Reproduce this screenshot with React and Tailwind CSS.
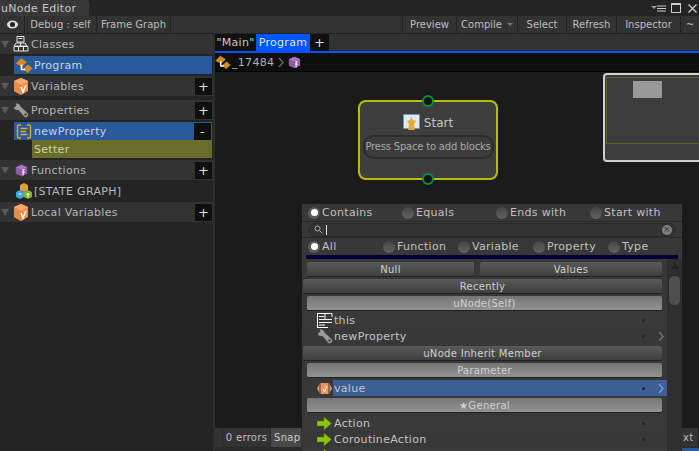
const VarIcon = () => (
  <svg width="16" height="17" viewBox="0 0 16 17" className="shrink-0">
    <polygon points="8,0 15,3 15,13 8,17 1,13 1,3" fill="#ef9150" />
    <polygon points="8,0 15,3 8,7 1,3" fill="#f5a973" />
    <polygon points="1,3 8,7 8,17 1,13" fill="#e88a48" />
    <path d="M8 9l2 5 3-7" stroke="#fff" strokeWidth="1.5" fill="none" />
  </svg>
);
const FnIcon = () => (
  <svg width="13" height="13" viewBox="0 0 16 16" className="shrink-0">
    <polygon points="8,1 15,4 15,12 8,15 1,12 1,4" fill="#8f5aa8" />
    <polygon points="8,1 15,4 8,7 1,4" fill="#a875bf" />
    <path d="M12 7h-2v7M9 10h3" stroke="#fff" strokeWidth="1.3" fill="none" />
  </svg>
);
const ClassIcon = ({ size = 18 }) => (
  <svg width={size} height={size} viewBox="0 0 18 17" className="shrink-0">
    <polygon points="0.500,7 6,1.500 12,5.500 7,10.500" fill="#cf8a2c" stroke="#8a5a1a" strokeWidth=".5" />
    <polygon points="8,12.500 13,8 17.500,12 12.500,16.500" fill="#cf8a2c" stroke="#8a5a1a" strokeWidth=".5" />
    <path d="M6.500 8V13H10" stroke="#fff" strokeWidth="1.600" fill="none" />
  </svg>
);
const BoxesIcon = () => (
  <svg width="16" height="17" viewBox="0 0 16 17" className="shrink-0">
    <polygon points="8,0 12,2 12,7 8,9 4,7 4,2" fill="#e99b3b" />
    <polygon points="4,7 8,9 8,14 4,16 0,14 0,9" fill="#3fa5e0" />
    <polygon points="12,7 16,9 16,14 12,16 8,14 8,9" fill="#7fb52f" />
    <path d="M2.500 11h3M10.500 11h3M12 11v3.500" stroke="#fff" fill="none" />
  </svg>
);
const Wrench = ({ c = "#9a9a9a" }) => (
  <svg width="16" height="15" viewBox="0 0 16 15" className="shrink-0">
    <path d="M1 4.500 3.500 2.500 2.500 .5C5 0 7 1 7.500 3.500L15 10.500C16 12.500 14 15 11.500 14L5.500 7C3 7.500 1 6.500 1 4.500Z" fill={c} />
    <circle cx="12.500" cy="11.500" r="1.200" fill="#444" />
  </svg>
);
const PropIcon = () => (
  <svg width="16" height="15" viewBox="0 0 16 15" className="shrink-0">
    <path d="M5 1H3Q1.500 1 1.500 3V12Q1.500 14 3 14H5M11 1H13Q14.500 1 14.500 3V12Q14.500 14 13 14H11" stroke="#e8a52c" strokeWidth="1.4" fill="none" />
    <path d="M4.500 4.500H11.500M4.500 7.500H10M4.500 10.500H11.500" stroke="#e8a52c" strokeWidth="1.4" />
  </svg>
);
const ThisIcon = () => (
  <svg width="16" height="15" viewBox="0 0 16 15" className="shrink-0">
    <path d="M0 .5H15M.5 0V15M0 14.500H11M7 3.500H2M2 6.500H15M2 9.500H15M2 12H8M8 1V6M15 .5V4" stroke="#fff" fill="none" />
  </svg>
);
const Arrow = () => (
  <svg width="15" height="13" viewBox="0 0 15 13" className="shrink-0">
    <path d="M0 4H7V0L14.500 6.500L7 13V9H0Z" fill="#8cc414" stroke="#4d7a05" strokeWidth=".6" />
  </svg>
);
const Chevron = ({ c = "#707070" }) => (
  <svg width="6" height="11" viewBox="0 0 6 11"><path d="M1 1 5 5.500 1 10" stroke={c} strokeWidth="1.400" fill="none" /></svg>
);
const Tri = () => <span className="w-0 h-0 border-x-[4px] border-x-transparent border-t-[7px] border-t-[#5a5a5a] ml-[1px] mr-[3px] shrink-0" />;
const Plus = ({ minus }) => (
  <span className="w-[17px] h-[17px] bg-[#0f0f0f] text-[#ddd] flex items-center justify-center text-[13px] shrink-0 ml-auto">{minus ? "-" : "+"}</span>
);
const Header = ({ icon, label, plus }) => (
  <div className="h-[20px] bg-[#333333] flex items-center pr-[1px] shrink-0">
    <Tri />
    <span className="w-[18px] flex justify-center mr-[1px] shrink-0">{icon}</span>
    <span className="text-[#b4b4b4]">{label}</span>
    {plus && <Plus />}
  </div>
);
const Tool = ({ children, w }) => (
  <div className={`flex items-center justify-center border-r border-[#222] h-full ${w}`}>{children}</div>
);
const Radio = ({ on, label, w }) => (
  <div className={`flex items-center ${w}`}>
    <span className={`w-[12px] h-[12px] rounded-full mr-[2px] shrink-0 flex items-center justify-center ${on ? "bg-[#5a5a5a]" : "bg-gradient-to-b from-[#444] to-[#626262]"}`}>
      {on && <span className="w-[7px] h-[7px] rounded-full bg-white" />}
    </span>
    <span className="text-[#c0c0c0]">{label}</span>
  </div>
);
const GBtn = ({ children, light, cls = "" }) => (
  <div className={`h-[15px] pt-[1px] rounded-[2px] shrink-0 flex items-center justify-center text-[10px] text-[#d0d0d0] border-b border-[#222] ${light ? "bg-gradient-to-b from-[#767676] to-[#929292]" : "bg-gradient-to-b from-[#5a5a5a] to-[#3f3f3f]"} ${cls}`}>{children}</div>
);
const Row = ({ icon, label, alt, chev, sel }) => (
  <div className={`h-[16px] shrink-0 flex items-center ${alt ? "bg-[#3a3a3a]" : "bg-[#383838]"}`}>
    <div className="w-[31px] pl-[14px] flex justify-center shrink-0">{icon}</div>
    <div className={`h-full flex-1 flex items-center ${sel ? "bg-[#3c5f96]" : ""}`}>
      <span className="text-[#c4c4c4] pl-[1px]">{label}</span>
      <span className="ml-auto w-[3px] h-[3px] rounded-full bg-[#262626]" />
      <span className="w-[22px] flex justify-end pr-[3px]">{chev && <Chevron c={sel ? "#7d9ccc" : "#707070"} />}</span>
    </div>
  </div>
);

export default function App() {
  return (
    <div className="relative w-[699px] h-[451px] overflow-hidden flex flex-col bg-[#1b1b1b] text-[11px] leading-none tracking-[0.3px]" style={{ fontFamily: '"DejaVu Sans", sans-serif' }}>
      <div className="h-[16px] bg-[#242424] flex items-stretch shrink-0">
        <div className="w-[89px] bg-[#383838] rounded-tr-[3px] flex items-center pl-[1px] text-[#c8c8c8] text-[11px]">uNode Editor</div>
        <div className="ml-auto flex items-center gap-[4px] pr-[2px]">
          <svg width="15" height="7" viewBox="0 0 15 7"><path d="M0 1 3 4 6 1Z" fill="#999" /><path d="M6 1H15M6 3.500H15M6 6H15" stroke="#ccc" /></svg>
          <span className="w-[10px] h-[10px] border border-[#ccc] border-t-[2px] ml-[1px]" />
          <svg width="9" height="9" viewBox="0 0 9 9" className="ml-[3px]"><path d="M.5 .5 8.500 8.500M8.500 .5 .5 8.500" stroke="#ccc" strokeWidth="1.300" /></svg>
        </div>
      </div>
      <div className="h-[18px] bg-[#333333] border-b border-[#222] flex items-center text-[10px] text-[#bdbdbd] tracking-normal shrink-0">
        <Tool w="w-[25px]">
          <svg width="11" height="9" viewBox="0 0 11 9"><ellipse cx="5.500" cy="4.500" rx="5.500" ry="4" fill="#ddd" /><circle cx="5.500" cy="4.500" r="2.500" fill="#222" /></svg>
        </Tool>
        <Tool w="w-[72px]">Debug : self</Tool>
        <Tool w="w-[74px]">Frame Graph</Tool>
        <div className="ml-auto flex h-full items-center border-l border-[#222]">
          <Tool w="w-[54px]">Preview</Tool>
          <Tool w="w-[61px]">Compile <span className="ml-[5px] w-0 h-0 border-x-[3px] border-x-transparent border-t-[3px] border-t-[#777]" /></Tool>
          <Tool w="w-[49px]">Select</Tool>
          <Tool w="w-[50px]">Refresh</Tool>
          <Tool w="w-[64px]">Inspector</Tool>
          <div className="w-[18px] flex justify-center">~</div>
        </div>
      </div>
      <div className="flex-1 flex min-h-0">
        <div className="w-[213px] bg-[#242424] flex flex-col shrink-0">
          <Header icon={<svg width="16" height="17" viewBox="0 0 16 17"><path d="M4 .5H11V6H4ZM5.500 2.500H9.500M7.500 6V10M3 7H12L14 10H1ZM1 10.500H15V15H1ZM5.500 11V15M10.500 11V15" stroke="#e5e5e5" fill="none" /></svg>} label="Classes" />
          <div className="h-[2px]" />
          <div className="h-[18px] ml-[14px] mr-[1px] bg-[#27599b] flex items-center shrink-0">
            <span className="w-[20px] flex justify-center shrink-0"><ClassIcon size={18} /></span>
            <span className="text-[#c8d4e4]">Program</span>
          </div>
          <div className="h-[2px]" />
          <Header icon={<VarIcon />} label="Variables" plus />
          <div className="h-[4px]" />
          <Header icon={<Wrench />} label="Properties" plus />
          <div className="h-[2px]" />
          <div className="h-[18px] ml-[14px] mr-[1px] bg-[#27599b] flex items-center pr-[1px] shrink-0">
            <span className="w-[20px] flex justify-center shrink-0"><PropIcon /></span>
            <span className="text-[#c8d4e4]">newProperty</span>
            <Plus minus />
          </div>
          <div className="h-[18px] ml-[32px] mr-[1px] bg-[#6a6d29] flex items-center pl-[2px] text-[#cfcfb4] shrink-0">Setter</div>
          <div className="h-[2px]" />
          <Header icon={<FnIcon />} label="Functions" plus />
          <div className="h-[22px] ml-[14px] flex items-center shrink-0">
            <span className="w-[20px] flex justify-center shrink-0"><BoxesIcon /></span>
            <span className="text-[#b8b8b8]">[STATE GRAPH]</span>
          </div>
          <Header icon={<VarIcon />} label="Local Variables" plus />
        </div>
        <div className="w-[2px] bg-[#2d2d2d] shrink-0" />
        <div className="flex-1 flex flex-col min-w-0 relative">
          <div className="h-[17px] bg-[#333333] flex items-stretch text-[11px] shrink-0">
            <div className="w-[41px] bg-[#111] text-[#c8c8c8] flex items-center justify-center">"Main"</div>
            <div className="w-[54px] bg-[#0055ff] text-[#dfe9ff] flex items-center justify-center">Program</div>
            <div className="w-[19px] bg-[#111] text-[#ddd] text-[13px] flex items-center justify-center">+</div>
          </div>
          <div className="h-[2px] bg-[#0055ff] shrink-0" />
          <div className="h-[19px] bg-[#0f0f0f] flex items-center border-b border-black text-[#b0b0b0] shrink-0">
            <ClassIcon size={16} />
            <span className="ml-[1px]">_17484</span>
            <span className="mx-[4px]"><Chevron c="#666" /></span>
            <FnIcon />
          </div>
          <div className="flex-1 bg-[#1b1b1b] relative">
            <div className="absolute left-[143px] top-[28px] w-[140px] h-[80px] rounded-[8px] border-2 border-[#bdbd00] bg-[#3e3e3e] flex flex-col items-center">
              <span className="absolute left-[62px] -top-[7px] w-[12px] h-[12px] rounded-full border-2 border-[#0a8f3c] bg-[#151515]" />
              <span className="absolute left-[62px] -bottom-[7px] w-[12px] h-[12px] rounded-full border-2 border-[#0a8f3c] bg-[#151515]" />
              <div className="h-[33px] pt-[8px] flex items-center justify-center text-[12px] text-[#c4c4c4] tracking-normal shrink-0">
                <svg width="17" height="18" viewBox="0 0 17 18" className="mr-[4px]">
                  <rect x=".5" y=".5" width="16" height="14" fill="#dfe9ef" stroke="#4d9ad0" strokeDasharray="2 2" />
                  <path d="M8.500 3 10 6 13 7 11 10 12 16H5L6 10 4 7 7 6Z" fill="#e3a73c" />
                </svg>
                Start
              </div>
              <div className="w-[131px] h-[24px] rounded-[10px] border-2 border-[#2c2c2c] bg-[#3c3c3c] flex items-center justify-center text-[10px] text-[#a8a8a8] tracking-[-0.2px] whitespace-nowrap shrink-0">Press Space to add blocks</div>
            </div>
            <div className="absolute left-[388px] top-[1px] w-[110px] h-[89px] rounded-[4px] border-2 border-[#cfcfcf] bg-[#3c3c3c] pt-[2px] pl-[1px]">
              <div className="h-[67px] border border-[#5f5f22] pl-[26px] pt-[3px]">
                <div className="w-[29px] h-[17px] bg-[#999]" />
              </div>
            </div>
          </div>
          <div className="h-[19px] bg-[#333333] flex items-stretch text-[10px] text-[#bdbdbd] shrink-0">
            <div className="ml-[7px] w-[49px] border-x border-[#2a2a2a] flex items-center justify-center">0 errors</div>
            <div className="w-[30px] bg-[#484848] flex items-center pl-[3px] text-[#ccc]">Snap</div>
            <div className="ml-auto w-[17px] flex items-center pl-[1px] border-r border-[#222]">xt</div>
          </div>
          <div className="h-[4px] bg-[#2a2a2a] flex justify-end shrink-0"><div className="w-[17px] bg-[#27599b] mt-[1px]" /></div>
        </div>
      </div>

      <div className="absolute left-[302px] top-[204px] w-[380px] h-[247px] bg-[#2f2f2f] flex flex-col text-[11px] overflow-hidden">
        <div className="h-[18px] bg-[#383838] flex items-center pl-[6px] border-b border-[#2a2a2a] shrink-0">
          <Radio on label="Contains" w="w-[94px]" />
          <Radio label="Equals" w="w-[94px]" />
          <Radio label="Ends with" w="w-[94px]" />
          <Radio label="Start with" w="w-[90px]" />
        </div>
        <div className="h-[16px] bg-[#383838] px-[6px] flex items-center border-b border-[#2a2a2a] shrink-0">
          <div className="flex-1 h-[14px] rounded-full bg-[#333] border border-[#282828] flex items-center pl-[5px] pr-[3px]">
            <svg width="9" height="9" viewBox="0 0 9 9"><circle cx="3.500" cy="3.500" r="2.500" stroke="#aaa" fill="none" /><path d="M5.500 5.500 8.500 8.500" stroke="#aaa" /></svg>
            <span className="ml-[3px] w-[1px] h-[10px] bg-[#ddd]" />
            <span className="ml-auto w-[10px] h-[10px] rounded-full bg-[#808080] text-[#333] text-[9px] flex items-center justify-center">×</span>
          </div>
        </div>
        <div className="h-[17px] bg-[#383838] flex items-center pl-[6px] shrink-0">
          <Radio on label="All" w="w-[75px]" />
          <Radio label="Function" w="w-[75px]" />
          <Radio label="Variable" w="w-[75px]" />
          <Radio label="Property" w="w-[75px]" />
          <Radio label="Type" w="w-[70px]" />
        </div>
        <div className="h-[4px] shrink-0 bg-[#383838] px-[4px]"><div className="h-full bg-[#00003a]" /></div>
        <div className="flex flex-1 min-h-0">
          <div className="w-[365px] bg-[#383838] flex flex-col pt-[3px] shrink-0">
            <div className="flex gap-[6px] pl-[5px] pr-[5px] mb-[2px] shrink-0">
              <GBtn cls="w-[167px]">Null</GBtn>
              <GBtn cls="flex-1">Values</GBtn>
            </div>
            <div className="pl-[1px] pr-[5px] mb-[2px] shrink-0"><GBtn>Recently</GBtn></div>
            <div className="pl-[5px] pr-[5px] mb-[1px] shrink-0"><GBtn light>uNode(Self)</GBtn></div>
            <Row icon={<ThisIcon />} label="this" alt />
            <Row icon={<Wrench />} label="newProperty" chev />
            <div className="pl-[1px] pr-[5px] my-[2px] shrink-0"><GBtn>uNode Inherit Member</GBtn></div>
            <div className="pl-[5px] pr-[5px] mb-[2px] shrink-0"><GBtn light>Parameter</GBtn></div>
            <Row sel icon={<svg width="15" height="11" viewBox="0 0 15 11"><path d="M3 0H12L15 5.500 12 11H3L0 5.500Z" fill="#ef9560" /><path d="M3 0V11M12 0V11" stroke="#3a3a3a" /><path d="M6 6 7.500 9 10 3" stroke="#fff" fill="none" /></svg>} label="value" chev />
            <div className="pl-[5px] pr-[5px] my-[2px] shrink-0"><GBtn light>★General</GBtn></div>
            <Row icon={<Arrow />} label="Action" alt />
            <Row icon={<Arrow />} label="CoroutineAction" />
            <Row icon={<Arrow />} label="callAction" alt />
          </div>
          <div className="flex-1 flex flex-col items-center pt-[4px]">
            <span className="w-0 h-0 border-x-[4px] border-x-transparent border-b-[6px] border-b-[#222]" />
            <div className="mt-[6px] w-[13px] h-[31px] rounded-[6px] bg-[#4f4f4f] border border-[#2a2a2a]" />
          </div>
        </div>
      </div>
    </div>
  );
}
